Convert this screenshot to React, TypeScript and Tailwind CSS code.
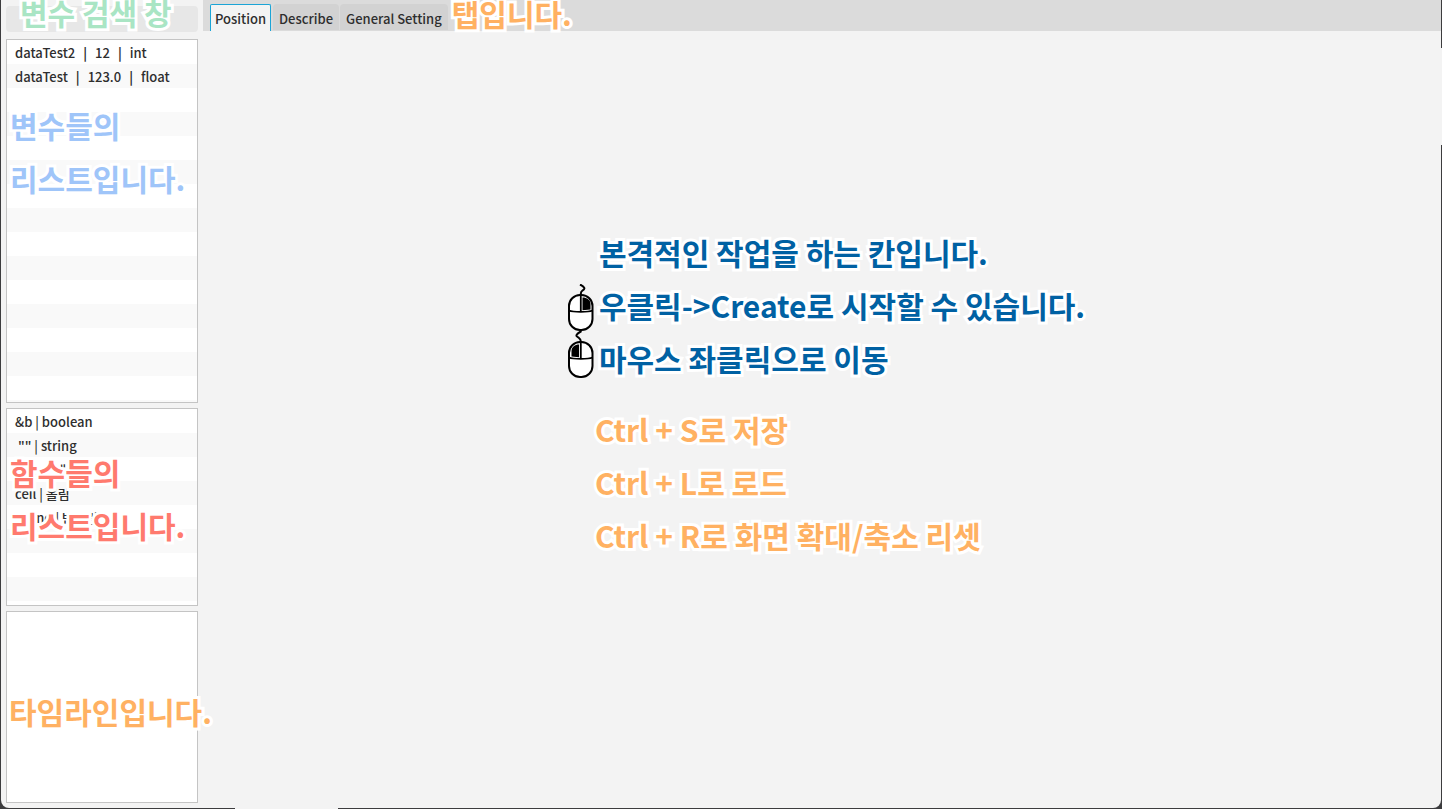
import React from "react";

const variables = [
  ["dataTest2", "12", "int"],
  ["dataTest", "123.0", "float"],
];
const functions = ["&b | boolean", ' "" | string', "floor | 내림", "ceil | 올림", "round | 반올림"];
const tabs = ["Position", "Describe", "General Setting"];

const noteBase =
  "whitespace-nowrap text-[30px] leading-[53px] font-bold [paint-order:stroke_fill] [-webkit-text-stroke:6px_white]";

function Note({ className = "", children }: { className?: string; children: React.ReactNode }) {
  return <p className={`${noteBase} ${className}`}>{children}</p>;
}

function StripedList({ label, children }: { label: string; children: React.ReactNode }) {
  return (
    <ul
      aria-label={label}
      className="flex-1 overflow-hidden border border-[#c4c4c4] bg-[repeating-linear-gradient(to_bottom,#ffffff_0px,#ffffff_24px,#f9f9f9_24px,#f9f9f9_48px)]"
    >
      {children}
    </ul>
  );
}

function MouseIcon({ button }: { button: "left" | "right" }) {
  const right = button === "right";
  return (
    <svg viewBox="0 0 28 47" className="h-[47px] w-7 shrink-0" fill="none" stroke="#000" strokeWidth="2" aria-hidden="true">
      <path
        d={right ? "M13 0.5C18 3 18.500 5 15.500 6.500C13.500 8 13.500 9 14 11" : "M14.500 0C9 3 8 5 11.500 6.500C13.500 8 14 9 14 11"}
        strokeWidth="2"
      />
      <rect x="2" y="11" width="23.500" height="35" rx="11" fill="#fff" />
      <path
        d={right ? "M15.500 13.500C20 13.500 23.500 16 23.500 20V25.500L15.500 26.300Z" : "M12 13.500C8 13.500 4.500 16 4.500 20V25.500L12 26.300Z"}
        fill="#000"
        stroke="none"
      />
      <path d="M2 26.500C6 28.300 21.500 28.300 25.500 26.500M13.800 11V27.500" strokeWidth="1.800" />
    </svg>
  );
}

export default function App() {
  return (
    <div className="relative h-screen min-h-[640px] overflow-hidden bg-[#3c3c3e] px-px pb-px font-['Noto_Sans_CJK_KR','Noto_Sans',sans-serif] text-[13px] font-medium text-[#2e2e2e]">
      <div className="flex h-full gap-[5px] rounded-b-lg bg-[#f3f3f3]">
        <aside className="flex w-[197px] shrink-0 flex-col gap-[5px] pt-1.5 pb-[5px] pl-[5px]">
          <div className="relative mb-0.5 h-[26px]">
            <input
              id="search"
              type="text"
              aria-labelledby="search-label"
              className="block h-[26px] w-full rounded bg-[#e7e7e7] px-2 outline-none"
            />
            <label
              id="search-label"
              htmlFor="search"
              className={`${noteBase} absolute -top-5 left-3.5 text-[#a9e5c4]`}
            >
              변수 검색 창
            </label>
          </div>

          <section className="relative flex flex-1 flex-col">
            <StripedList label="변수">
              {variables.map((parts) => (
                <li key={parts[0]} className="flex h-6 gap-2 px-2 leading-[26px]">
                  {parts.map((part, i) => (
                    <React.Fragment key={part}>
                      {i > 0 && <span className="font-bold">|</span>}
                      <span>{part}</span>
                    </React.Fragment>
                  ))}
                </li>
              ))}
            </StripedList>
            <div className="absolute top-[60px] left-1">
              <Note className="text-[#9fc5f9]">
                변수들의
                <br />
                리스트입니다.
              </Note>
            </div>
          </section>

          <section className="relative flex h-[198px] flex-col">
            <StripedList label="함수">
              {functions.map((item) => (
                <li key={item} className="h-6 px-2 leading-[26px] whitespace-pre">
                  {item}
                </li>
              ))}
            </StripedList>
            <div className="absolute top-[38px] left-1">
              <Note className="text-[#ff7a6e]">
                함수들의
                <br />
                리스트입니다.
              </Note>
            </div>
          </section>

          <section className="relative z-10 h-48 border border-[#c4c4c4] bg-white">
            <div className="absolute top-[73px] left-0.5">
              <Note className="text-[#ffb162]">타임라인입니다.</Note>
            </div>
          </section>
        </aside>

        <main className="flex min-w-0 flex-1 flex-col">
          <div className="flex h-[31px] items-end bg-[#dbdbdb] pl-[7px]">
            <div role="tablist" className="flex h-[27px] gap-px">
              {tabs.map((tab, i) => (
                <button
                  key={tab}
                  type="button"
                  role="tab"
                  aria-selected={i === 0}
                  className={
                    i === 0
                      ? "mr-px rounded-t-xs border border-b-0 border-[#1ba4d6] bg-[#f3f3f3] px-1 pt-0.5"
                      : "mb-px rounded-t-sm bg-[#d2d2d2] px-1.5 pt-1"
                  }
                >
                  {tab}
                </button>
              ))}
            </div>
            <div className="relative h-[31px]">
              <div className="absolute -top-[13px] left-1">
                <Note className="text-[#ffb162]">탭입니다.</Note>
              </div>
            </div>
          </div>

          <div className="mx-auto w-fit pt-[195px] pl-2">
            <div className="grid grid-cols-[auto_1fr] gap-x-1">
              <Note className="col-start-2 text-[#0061a3]">본격적인 작업을 하는 칸입니다.</Note>
              <div className="row-span-2 flex flex-col pt-[5px]">
                <MouseIcon button="right" />
                <MouseIcon button="left" />
              </div>
              <Note className="text-[#0061a3]">우클릭-&gt;Create로 시작할 수 있습니다.</Note>
              <Note className="text-[#0061a3]">마우스 좌클릭으로 이동</Note>
            </div>
            <div className="mt-[18px] pl-7 text-[#ffb162]">
              <Note>Ctrl + S로 저장</Note>
              <Note>Ctrl + L로 로드</Note>
              <Note>Ctrl + R로 화면 확대/축소 리셋</Note>
            </div>
          </div>
        </main>
      </div>
      <span className="absolute top-12 right-0 h-[97px] w-px bg-[#f3f3f3]" />
      <span className="absolute bottom-0 left-[235px] h-px w-[103px] bg-[#f3f3f3]" />
    </div>
  );
}
